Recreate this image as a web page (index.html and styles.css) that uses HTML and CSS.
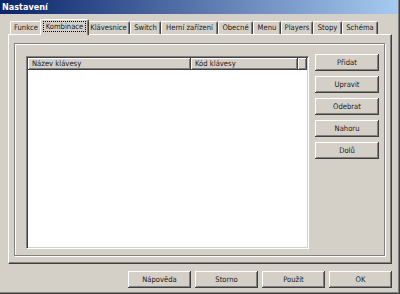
FILE: index.html
```html
<!DOCTYPE html>
<html lang="cs">
<head>
    <meta charset="UTF-8">
    <title>Nastavení</title>
    <link rel="stylesheet" href="styles.css">
</head>
<body>

<div class="window">
    <div class="titlebar">Nastavení</div>

    <div class="content">
        <!-- záložky -->
        <div class="tabs">
            <div class="tab tab-funkce">Funkce</div>
            <div class="tab tab-kombinace active"><span class="focus">Kombinace</span></div>
            <div class="tab tab-klavesnice">Klávesnice</div>
            <div class="tab tab-switch">Switch</div>
            <div class="tab tab-herni">Herní zařízení</div>
            <div class="tab tab-obecne">Obecné</div>
            <div class="tab tab-menu">Menu</div>
            <div class="tab tab-players">Players</div>
            <div class="tab tab-stopy">Stopy</div>
            <div class="tab tab-schema">Schéma</div>
        </div>

        <div class="tab-body">
            <div class="group">
                <div class="list">
                    <div class="list-head">
                        <div class="col col-name">Název klávesy</div>
                        <div class="col col-code">Kód klávesy</div>
                        <div class="col col-rest"></div>
                    </div>
                </div>
                <div class="side-buttons">
                    <button class="btn">Přidat</button>
                    <button class="btn">Upravit</button>
                    <button class="btn">Odebrat</button>
                    <button class="btn">Nahoru</button>
                    <button class="btn">Dolů</button>
                </div>
            </div>
        </div>

        <div class="bottom-buttons">
            <button class="btn btn-wide">Nápověda</button>
            <button class="btn btn-wide">Storno</button>
            <button class="btn btn-wide">Použít</button>
            <button class="btn btn-wide">OK</button>
        </div>
    </div>
</div>

</body>
</html>
```

FILE: styles.css
```css
body {
    margin: 0;
    padding: 0;
    background-color: #d4d0c8;
    font-family: "DejaVu Sans Condensed", "Liberation Sans Narrow", "Liberation Sans", sans-serif;
    font-size: 7.6px;
    color: #1a1a1a;
}
.window {
    width: 400px;
    height: 294px;
    box-sizing: border-box;
    background-color: #d4d0c8;
    box-shadow: inset -1px -1px #404040, inset -2px -2px #808080;
    overflow: hidden;
}
.titlebar {
    height: 14px;
    margin-right: 2px;
    line-height: 14px;
    padding-left: 2px;
    color: white;
    font-weight: bold;
    font-size: 9px;
    background: linear-gradient(to right, #0a246a, #a6caf0);
}
.content {
    padding: 5px 8px 0 8px;
}
.tabs {
    display: flex;
    align-items: flex-end;
    height: 15px;
    padding-left: 2px;
}
.tab {
    box-sizing: border-box;
    height: 13px;
    line-height: 12px;
    text-align: center;
    border-left: 1px solid #fff;
    border-top: 1px solid #fff;
    border-right: 1px solid #404040;
    border-top-left-radius: 2px;
    border-top-right-radius: 2px;
    box-shadow: inset -1px 0 #808080;
    white-space: nowrap;
}
.tab-funkce { width: 32px; }
.tab-kombinace { width: 45px; }
.tab-klavesnice { width: 43px; }
.tab-switch { width: 31px; }
.tab-herni { width: 57px; }
.tab-obecne { width: 35px; }
.tab-menu { width: 28px; }
.tab-players { width: 32px; }
.tab-stopy { width: 29px; }
.tab-schema { width: 36px; }
.tab.active {
    width: 49px;
    height: 16px;
    line-height: 14px;
    margin: 0 -2px -1px -2px;
    position: relative;
    z-index: 1;
    background-color: #d4d0c8;
}
.focus {
    outline: 1px dotted #000;
    padding: 0 2px;
}
.tab-body {
    height: 230px;
    box-sizing: border-box;
    padding: 8px 6px 7px 5px;
    border-left: 1px solid #fff;
    border-top: 1px solid #fff;
    border-right: 1px solid #404040;
    border-bottom: 1px solid #404040;
    box-shadow: inset -1px -1px #808080;
}
.group {
    display: flex;
    align-items: flex-start;
    height: 100%;
    box-sizing: border-box;
    padding: 10px 0 0 11px;
    border: 1px solid #808080;
    box-shadow: 1px 1px #fff, inset 1px 1px #fff;
}
.list {
    width: 283px;
    height: 193px;
    margin-top: 2px;
    box-sizing: border-box;
    background-color: white;
    border-top: 1px solid #808080;
    border-left: 1px solid #808080;
    border-right: 1px solid #fff;
    border-bottom: 1px solid #fff;
    box-shadow: inset 1px 1px #404040, inset -1px -1px #d4d0c8;
    padding: 1px;
}
.list-head {
    display: flex;
    height: 12px;
}
.col {
    box-sizing: border-box;
    height: 12px;
    line-height: 11px;
    padding-left: 4px;
    background-color: #d4d0c8;
    box-shadow: inset 1px 1px #fff, inset -1px -1px #808080;
    border-right: 1px solid #404040;
    border-bottom: 1px solid #404040;
}
.col-name {
    width: 163px;
}
.col-code {
    width: 107px;
}
.col-rest {
    flex: 1;
}
.side-buttons {
    display: flex;
    flex-direction: column;
    gap: 5px;
    margin-left: 6px;
}
.btn {
    width: 64px;
    height: 17px;
    padding: 0;
    font-family: inherit;
    font-size: 7.6px;
    color: #1a1a1a;
    background-color: #d4d0c8;
    border: none;
    box-shadow: inset -1px -1px #404040, inset 1px 1px #fff, inset -2px -2px #808080;
}
.bottom-buttons {
    display: flex;
    justify-content: flex-end;
    gap: 4px;
    margin-top: 7px;
}
.btn-wide {
    width: 63px;
}
```
